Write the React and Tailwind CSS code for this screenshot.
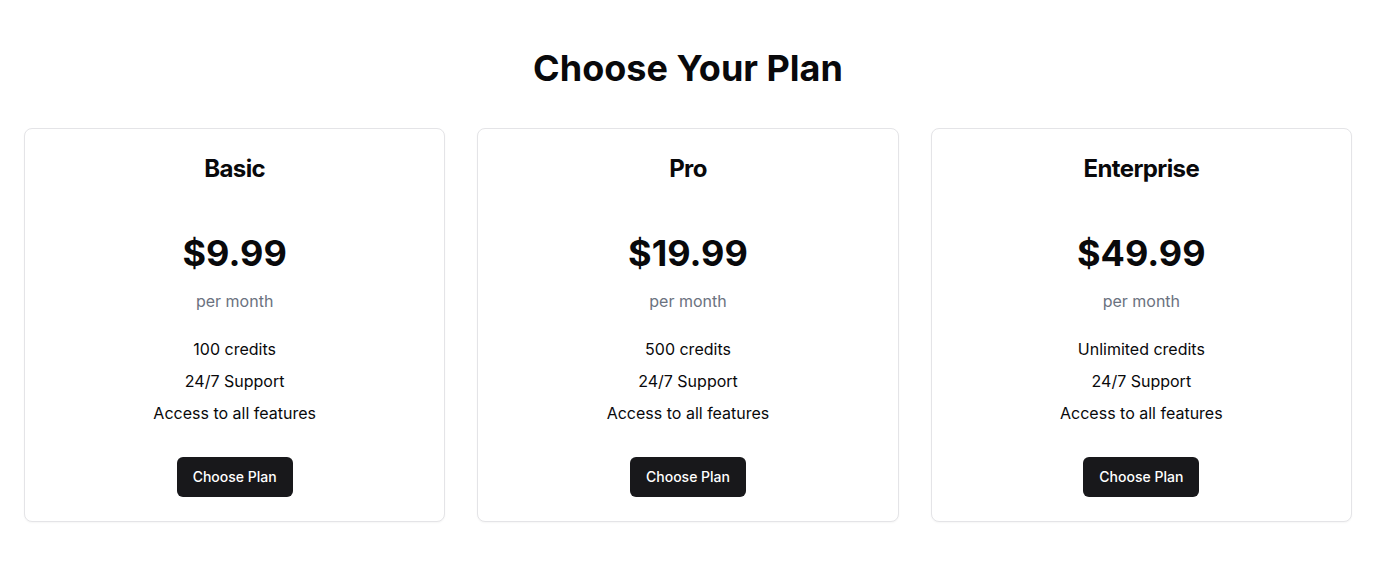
export default function App() {
  const plans = [
    { name: "Basic", price: "$9.99", features: ["100 credits", "24/7 Support", "Access to all features"] },
    { name: "Pro", price: "$19.99", features: ["500 credits", "24/7 Support", "Access to all features"] },
    { name: "Enterprise", price: "$49.99", features: ["Unlimited credits", "24/7 Support", "Access to all features"] },
  ];
  return (
    <div className="min-h-[570px] bg-white px-6 pt-12 text-[#09090b]" style={{ fontFamily: "Inter, 'Noto Sans', sans-serif" }}>
      <h1 className="text-center text-4xl leading-10 font-bold mb-10">Choose Your Plan</h1>
      <div className="grid grid-cols-3 gap-8">
        {plans.map((p) => (
          <div key={p.name} className="flex flex-col items-center rounded-lg border border-[#e4e4e7] bg-white p-6 shadow-[0_1px_2px_rgba(0,0,0,0.04)]">
            <h3 className="text-2xl leading-8 font-bold tracking-tight">{p.name}</h3>
            <div className="mt-12 text-4xl leading-10 font-bold">{p.price}</div>
            <div className="mt-4 text-base leading-6 text-[#6b7280]">per month</div>
            <ul className="mt-6 flex flex-col items-center gap-2 text-base leading-6">
              {p.features.map((f) => (
                <li key={f}>{f}</li>
              ))}
            </ul>
            <button className="mt-8 h-10 rounded-md bg-[#18181b] px-4 text-sm font-medium text-white">Choose Plan</button>
          </div>
        ))}
      </div>
    </div>
  );
}
